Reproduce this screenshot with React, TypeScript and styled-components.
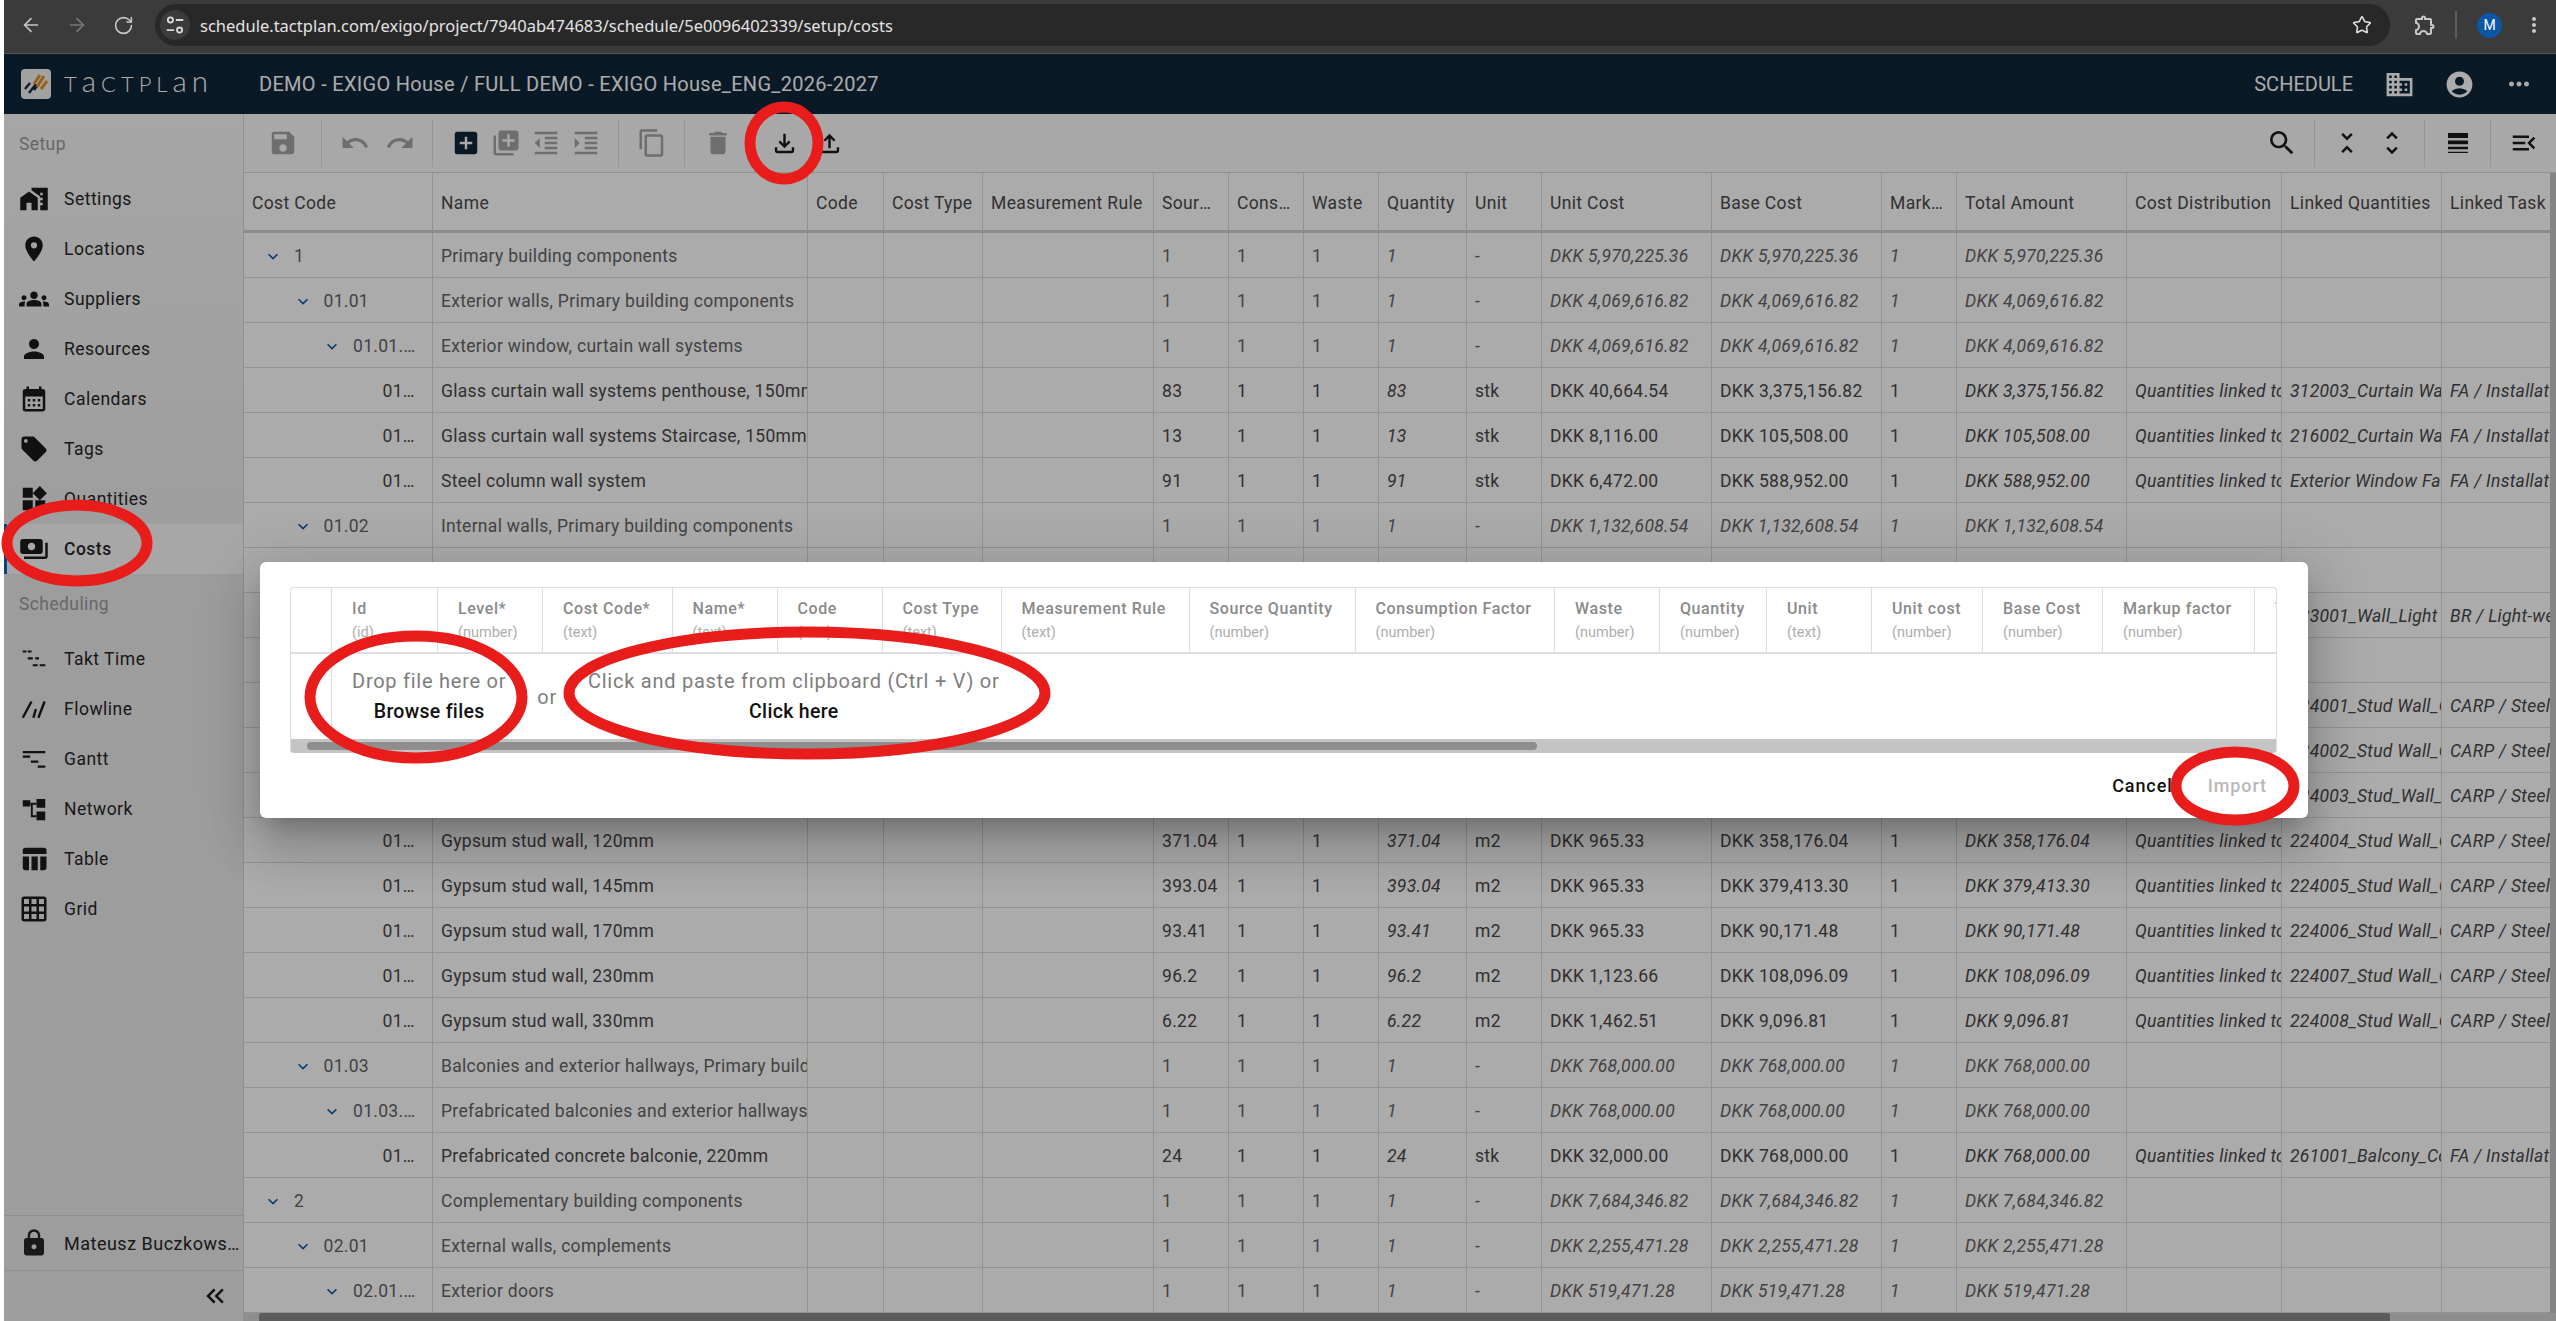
import styled, { createGlobalStyle } from "styled-components";
import { ArrowLeft, ArrowRight, RotateCw, Star } from "lucide-react";
import {
  MdAccountCircle,
  MdAddBox,
  MdCalendarMonth,
  MdContentCopy,
  MdDelete,
  MdDomain,
  MdExpandMore,
  MdFormatIndentDecrease,
  MdFormatIndentIncrease,
  MdGridOn,
  MdGroups,
  MdHomeWork,
  MdKeyboardDoubleArrowLeft,
  MdLibraryAdd,
  MdLocalOffer,
  MdLocationOn,
  MdLock,
  MdMenuOpen,
  MdMoreHoriz,
  MdMoreVert,
  MdOutlineExtension,
  MdOutlineFileDownload,
  MdOutlineFileUpload,
  MdPayments,
  MdPerson,
  MdRedo,
  MdSave,
  MdSearch,
  MdTableChart,
  MdUndo,
  MdUnfoldLess,
  MdUnfoldMore,
  MdWidgets,
} from "react-icons/md";

const GlobalStyle = createGlobalStyle`
  html, body {
    margin: 0;
    height: 100%;
    background: #fff;
    overflow: hidden;
  }
  body {
    font-family: Roboto, "Liberation Sans", sans-serif;
    padding-left: 4px;
    box-sizing: border-box;
  }
  #root { height: 100%; }
  * { box-sizing: border-box; }
`;

const COLUMNS = "189px 375px 76px 99px 171px 75px 75px 75px 88px 75px 170px 170px 75px 170px 155px 160px 160px";

const TaktIcon = () => (
  <svg width="30" height="30" viewBox="0 0 24 24" stroke="currentColor" strokeWidth="1.7" fill="none">
    <path d="M3 6h3M7 6h3M7 11.5h4M13 11.5h3M11 17h4M16.5 17h4.5" />
  </svg>
);

const FlowIcon = () => (
  <svg width="30" height="30" viewBox="0 0 24 24" stroke="currentColor" strokeWidth="1.9" fill="none">
    <path d="M3 19 10 6M11.5 19l2-7M15.5 19l5-13" />
  </svg>
);

const GanttIcon = () => (
  <svg width="30" height="30" viewBox="0 0 24 24" stroke="currentColor" strokeWidth="1.8" fill="none">
    <path d="M3 6.5h18M3 10h6M9.5 14h6M15 18h6" />
  </svg>
);

const NetworkIcon = () => (
  <svg width="30" height="30" viewBox="0 0 24 24" fill="currentColor">
    <rect x="3" y="5" width="6" height="5" />
    <rect x="14" y="4" width="7" height="7" />
    <rect x="14" y="14" width="7" height="7" />
    <path d="M9 7h5v1.500h-3V17h3v1.500H9.500V8.500H9z" />
  </svg>
);

const DensityIcon = () => (
  <svg width="30" height="30" viewBox="0 0 24 24" fill="currentColor">
    <path d="M4 4h16v4H4zM4 10h16v3H4zM4 15h16v2H4zM4 19h16v1H4z" />
  </svg>
);

const LogoMark = () => (
  <svg width="30" height="30" viewBox="0 0 30 30">
    <rect width="30" height="30" rx="4" fill="#f2f2f2" />
    <path d="M4 20l5-6M8 24l7-9M13 21l3-4" stroke="#1c2733" strokeWidth="2.400" />
    <path d="M13 15l6-9M16 18l7-11M20 20l6-8" stroke="#e2912c" strokeWidth="3" />
  </svg>
);

const SiteIcon = () => (
  <svg width="22" height="22" viewBox="0 0 24 24" fill="none" stroke="#d8d8d8" strokeWidth="2">
    <circle cx="7" cy="6.500" r="2.800" />
    <path d="M13 6.500h8M3 17.500h8" />
    <circle cx="17" cy="17.500" r="2.800" />
  </svg>
);

const Page = styled.div`
  display: flex;
  flex-direction: column;
  height: 100%;
`;

const BrowserBar = styled.div`
  display: flex;
  align-items: center;
  height: 54px;
  flex: none;
  padding: 0 0 3px 4px;
  background: #3b3b3b;
  border-bottom: 1px solid #555;
`;

const NavButton = styled.div<{ $dim?: boolean }>`
  display: flex;
  justify-content: center;
  width: 46px;
  color: ${(p) => (p.$dim ? "#797979" : "#c7c7c7")};
`;

const AddressBar = styled.div`
  display: flex;
  align-items: center;
  width: 2235px;
  height: 42px;
  margin-left: 9px;
  padding: 0 18px 0 5px;
  background: #282828;
  border-radius: 21px;
  color: #e3e3e3;
`;

const SiteBadge = styled.div`
  display: flex;
  align-items: center;
  justify-content: center;
  width: 30px;
  height: 30px;
  border-radius: 50%;
  background: #3b3b3b;
  flex: none;
`;

const Url = styled.span`
  margin-left: 10px;
  font-family: "Noto Sans", sans-serif;
  font-size: 16.500px;
  flex: 1;
`;

const ChromeIcons = styled.div`
  display: flex;
  align-items: center;
  flex: 1;
  color: #c7c7c7;
  padding-left: 23px;
`;

const Divider = styled.div`
  width: 2px;
  height: 28px;
  background: #5c5c5c;
  margin: 0 20px 0 18px;
`;

const Avatar = styled.div`
  display: flex;
  align-items: center;
  justify-content: center;
  width: 25px;
  height: 25px;
  border-radius: 50%;
  background: #0b57a4;
  color: #fff;
  font-size: 14px;
  margin-right: 20px;
`;

const AppShell = styled.div`
  position: relative;
  flex: 1;
  min-height: 0;
  display: flex;
  flex-direction: column;
`;

const AppHeader = styled.header`
  display: flex;
  align-items: center;
  flex: none;
  height: 60px;
  padding: 0 7px 0 17px;
  background: #0f263a;
  color: #fff;
`;

const Logo = styled.div`
  display: flex;
  align-items: center;
  width: 238px;
  gap: 13px;
  flex: none;
`;

const LogoText = styled.span`
  font-family: Lato, sans-serif;
  font-weight: 300;
  font-size: 22px;
  letter-spacing: 5px;
  color: #fff;
  line-height: 1;
`;

const LogoRound = styled.span`
  font-size: 1.340em;
  line-height: 0;
`;

const ProjectTitle = styled.div`
  font-size: 20px;
  letter-spacing: 0.300px;
`;

const ModuleLabel = styled.div`
  margin-left: auto;
  margin-right: 16px;
  font-size: 20px;
`;

const HeaderButton = styled.div`
  display: flex;
  align-items: center;
  justify-content: center;
  width: 60px;
`;

const Workspace = styled.div`
  flex: 1;
  min-height: 0;
  display: flex;
`;

const Sidebar = styled.nav`
  display: flex;
  flex-direction: column;
  flex: none;
  width: 240px;
  background: linear-gradient(#f8f8f8, #ebebeb 35%);
  border-right: 1px solid #d8d8d8;
`;

const SectionLabel = styled.div`
  display: flex;
  align-items: center;
  height: 60px;
  padding-left: 15px;
  font-size: 17.500px;
  letter-spacing: 0.400px;
  color: #9a9a9a;
`;

const NavItem = styled.div<{ $active?: boolean }>`
  display: flex;
  align-items: center;
  gap: 15px;
  height: 50px;
  font-size: 17.500px;
  letter-spacing: 0.500px;
  color: #262626;
  font-weight: ${(p) => (p.$active ? 500 : 400)};
  background: ${(p) => (p.$active ? "#fafafa" : "transparent")};
  border-left: ${(p) => (p.$active ? "3px solid #1565c0" : "0")};
  padding-left: ${(p) => (p.$active ? "12px" : "15px")};
  svg {
    flex: none;
    color: #1a1a1a;
  }
`;

const SidebarFooter = styled.div`
  margin-top: auto;
  border-top: 1px solid #d6d6d6;
`;

const UserRow = styled.div`
  display: flex;
  align-items: center;
  gap: 15px;
  height: 55px;
  padding-left: 15px;
  font-size: 18px;
  letter-spacing: 0.500px;
  color: #262626;
  border-bottom: 1px solid #d6d6d6;
`;

const UserName = styled.span`
  min-width: 0;
  flex: 1;
  overflow: hidden;
  white-space: nowrap;
  text-overflow: ellipsis;
  padding-right: 3px;
`;

const CollapseRow = styled.div`
  display: flex;
  align-items: center;
  justify-content: flex-end;
  height: 50px;
  padding-right: 13px;
  color: #1a1a1a;
`;

const Main = styled.main`
  flex: 1;
  min-width: 0;
  display: flex;
  flex-direction: column;
`;

const Toolbar = styled.div`
  display: flex;
  align-items: center;
  flex: none;
  height: 59px;
  background: #fbfbfb;
  border-bottom: 1px solid #d8d8d8;
`;

const ToolGroup = styled.div<{ $width: number; $last?: boolean; $push?: boolean }>`
  display: flex;
  align-items: center;
  justify-content: center;
  width: ${(p) => p.$width}px;
  height: 47px;
  flex: none;
  margin-left: ${(p) => (p.$push ? "auto" : "0")};
  border-right: ${(p) => (p.$last ? "0" : "1px solid #e0e0e0")};
`;

const ToolButton = styled.div<{ $on?: boolean; $wide?: boolean }>`
  display: flex;
  align-items: center;
  justify-content: center;
  width: ${(p) => (p.$wide ? 45 : 40)}px;
  color: ${(p) => (p.$on ? "#1a1a1a" : "#a5a5a5")};
`;

const AddButton = styled(ToolButton)`
  color: #0f263a;
`;

const TableArea = styled.div`
  flex: 1;
  min-height: 0;
  display: flex;
`;

const Grid = styled.div`
  flex: 1;
  min-width: 0;
  overflow: hidden;
  background: #fff;
`;

const HeaderRow = styled.div`
  display: grid;
  grid-template-columns: ${COLUMNS};
  height: 60px;
  border-bottom: 3px solid #cfcfcf;
`;

const HeaderCell = styled.div`
  display: flex;
  align-items: center;
  min-width: 0;
  padding: 2px 8px 0;
  border-right: 1px solid #dcdcdc;
  font-size: 17.500px;
  letter-spacing: 0.350px;
  color: #4a4a4a;
`;

const HeaderText = styled.span`
  overflow: hidden;
  white-space: nowrap;
  text-overflow: ellipsis;
`;

const Row = styled.div`
  display: grid;
  grid-template-columns: ${COLUMNS};
  height: 45px;
  border-bottom: 1px solid #dcdcdc;
`;

const Cell = styled.div<{ $italic?: boolean; $group?: boolean }>`
  min-width: 0;
  padding: 0 8px;
  line-height: 46px;
  border-right: 1px solid #dcdcdc;
  font-size: 17.500px;
  letter-spacing: 0.300px;
  white-space: nowrap;
  overflow: hidden;
  font-style: ${(p) => (p.$italic ? "italic" : "normal")};
  color: ${(p) => (p.$group ? "#646464" : "#484848")};
`;

const CodeCell = styled(Cell)<{ $level: number }>`
  display: flex;
  align-items: center;
  padding: 2px 13px 0 ${(p) => 19 + (p.$level - 1) * 29.5}px;
`;

const Chevron = styled.span`
  display: flex;
  justify-content: center;
  flex: none;
  width: 20px;
  margin-right: 11px;
  color: #0a57ab;
`;

const CodeText = styled.span`
  overflow: hidden;
  text-overflow: ellipsis;
`;

const VScroll = styled.div`
  flex: none;
  width: 6px;
  background: #c5c5c5;
`;

const HScroll = styled.div`
  flex: none;
  height: 8px;
  padding-left: 15px;
  padding-right: 166px;
  background: #d4d4d4;
`;

const HThumb = styled.div`
  height: 100%;
  background: #8a8a8a;
  border-radius: 2px 2px 0 0;
`;

const Backdrop = styled.div`
  position: absolute;
  inset: 0;
  background: rgba(0, 0, 0, 0.33);
`;

const Dialog = styled.div`
  position: absolute;
  left: 256px;
  top: 508px;
  width: 2048px;
  height: 256px;
  display: flex;
  flex-direction: column;
  padding: 25px 31px 0 30px;
  background: #fff;
  border-radius: 6px;
  box-shadow: 0 14px 19px -9px rgba(0, 0, 0, 0.2), 0 30px 48px 4px rgba(0, 0, 0, 0.14),
    0 11px 58px 10px rgba(0, 0, 0, 0.12);
`;

const ImportTable = styled.div`
  height: 166px;
  flex: none;
  display: flex;
  flex-direction: column;
  overflow: hidden;
  border: 1px solid #dedede;
  border-bottom: 0;
  border-radius: 4px 4px 0 0;
`;

const ImportHead = styled.div`
  display: flex;
  flex: none;
  height: 66px;
  border-bottom: 2px solid #dedede;
`;

const ImportCol = styled.div<{ $width: number }>`
  flex: none;
  width: ${(p) => p.$width}px;
  padding: 11px 0 0 20px;
  border-right: 1px solid #dedede;
  white-space: nowrap;
`;

const ColName = styled.div`
  font-size: 16px;
  font-weight: 500;
  line-height: 20px;
  letter-spacing: 0.600px;
  color: #8a8a8a;
`;

const ColType = styled.div`
  margin-top: 4px;
  font-size: 14.500px;
  line-height: 20px;
  color: #adadad;
`;

const ImportBody = styled.div`
  flex: 1;
  display: flex;
`;

const SpacerCell = styled.div`
  flex: none;
  width: 41px;
  border-right: 1px solid #dedede;
`;

const DropArea = styled.div`
  display: flex;
  align-items: center;
  padding: 0 0 0 20px;
  font-size: 20px;
  letter-spacing: 0.750px;
  color: #7d7d7d;
`;

const DropChoice = styled.div`
  display: flex;
  flex-direction: column;
  align-items: center;
  gap: 9px;
  line-height: 22px;
`;

const OrLabel = styled.span`
  margin: 0 31px;
`;

const ChoiceLink = styled.span`
  font-size: 19.500px;
  font-weight: 500;
  letter-spacing: 0.300px;
  color: #111;
`;

const ImportScroll = styled.div`
  flex: none;
  height: 14px;
  padding: 3px 739px 3px 16px;
  background: #c4c4c4;
  border-radius: 0 0 3px 3px;
`;

const ImportThumb = styled.div`
  height: 100%;
  border-radius: 4px;
  background: #8e8e8e;
`;

const DialogActions = styled.div`
  flex: 1;
  display: flex;
  align-items: center;
  justify-content: flex-end;
  gap: 35px;
  padding-right: 10px;
`;

const ActionButton = styled.span<{ $disabled?: boolean }>`
  font-size: 18px;
  font-weight: 500;
  letter-spacing: 0.900px;
  color: ${(p) => (p.$disabled ? "#b8b8b8" : "#111")};
`;

const Annotations = styled.svg`
  position: absolute;
  left: -4px;
  top: -54px;
  width: 2556px;
  height: 1321px;
  pointer-events: none;
`;

interface CostRow {
  level: number;
  code: string;
  name: string;
  source: string;
  unit: string;
  unitCost: string;
  base: string;
  total: string;
  distribution?: string;
  linked?: string;
  task?: string;
  group?: boolean;
}

const group = (level: number, code: string, name: string, amount: string): CostRow => ({
  level,
  code,
  name,
  source: "1",
  unit: "-",
  unitCost: amount,
  base: amount,
  total: amount,
  group: true,
});

const leaf = (
  code: string,
  name: string,
  source: string,
  unit: string,
  unitCost: string,
  base: string,
  linked: string,
  task: string,
): CostRow => ({
  level: 4,
  code,
  name,
  source,
  unit,
  unitCost,
  base,
  total: base,
  distribution: "Quantities linked to cost",
  linked,
  task,
});

const covered = (linked = "", task = ""): CostRow => ({
  level: 4,
  code: "",
  name: "",
  source: "",
  unit: "",
  unitCost: "",
  base: "",
  total: "",
  linked,
  task,
});

const rows: CostRow[] = [
  group(1, "1", "Primary building components", "DKK 5,970,225.36"),
  group(2, "01.01", "Exterior walls, Primary building components", "DKK 4,069,616.82"),
  group(3, "01.01.01", "Exterior window, curtain wall systems", "DKK 4,069,616.82"),
  leaf("01.01.01.01", "Glass curtain wall systems penthouse, 150mm", "83", "stk", "DKK 40,664.54", "DKK 3,375,156.82", "312003_Curtain Wall_Glass", "FA / Installation"),
  leaf("01.01.01.02", "Glass curtain wall systems Staircase, 150mm", "13", "stk", "DKK 8,116.00", "DKK 105,508.00", "216002_Curtain Wall_Glass", "FA / Installation"),
  leaf("01.01.01.03", "Steel column wall system", "91", "stk", "DKK 6,472.00", "DKK 588,952.00", "Exterior Window Facade", "FA / Installation"),
  group(2, "01.02", "Internal walls, Primary building components", "DKK 1,132,608.54"),
  covered(),
  covered("223001_Wall_Light weight", "BR / Light-weight"),
  covered(),
  covered("224001_Stud Wall_Gypsum", "CARP / Steel stud"),
  covered("224002_Stud Wall_Gypsum", "CARP / Steel stud"),
  covered("224003_Stud_Wall_Gypsum", "CARP / Steel stud"),
  leaf("01.02.02.04", "Gypsum stud wall, 120mm", "371.04", "m2", "DKK 965.33", "DKK 358,176.04", "224004_Stud Wall_Gypsum", "CARP / Steel stud"),
  leaf("01.02.02.05", "Gypsum stud wall, 145mm", "393.04", "m2", "DKK 965.33", "DKK 379,413.30", "224005_Stud Wall_Gypsum", "CARP / Steel stud"),
  leaf("01.02.02.06", "Gypsum stud wall, 170mm", "93.41", "m2", "DKK 965.33", "DKK 90,171.48", "224006_Stud Wall_Gypsum", "CARP / Steel stud"),
  leaf("01.02.02.07", "Gypsum stud wall, 230mm", "96.2", "m2", "DKK 1,123.66", "DKK 108,096.09", "224007_Stud Wall_Gypsum", "CARP / Steel stud"),
  leaf("01.02.02.08", "Gypsum stud wall, 330mm", "6.22", "m2", "DKK 1,462.51", "DKK 9,096.81", "224008_Stud Wall_Gypsum", "CARP / Steel stud"),
  group(2, "01.03", "Balconies and exterior hallways, Primary building components", "DKK 768,000.00"),
  group(3, "01.03.01", "Prefabricated balconies and exterior hallways", "DKK 768,000.00"),
  leaf("01.03.01.01", "Prefabricated concrete balconie, 220mm", "24", "stk", "DKK 32,000.00", "DKK 768,000.00", "261001_Balcony_Concrete", "FA / Installation"),
  group(1, "2", "Complementary building components", "DKK 7,684,346.82"),
  group(2, "02.01", "External walls, complements", "DKK 2,255,471.28"),
  group(3, "02.01.01", "Exterior doors", "DKK 519,471.28"),
];

const headers = [
  "Cost Code",
  "Name",
  "Code",
  "Cost Type",
  "Measurement Rule",
  "Source Quantity",
  "Consumption Factor",
  "Waste",
  "Quantity",
  "Unit",
  "Unit Cost",
  "Base Cost",
  "Markup Factor",
  "Total Amount",
  "Cost Distribution",
  "Linked Quantities",
  "Linked Task",
];

const setupItems = [
  { label: "Settings", icon: <MdHomeWork size={30} /> },
  { label: "Locations", icon: <MdLocationOn size={30} /> },
  { label: "Suppliers", icon: <MdGroups size={30} /> },
  { label: "Resources", icon: <MdPerson size={30} /> },
  { label: "Calendars", icon: <MdCalendarMonth size={30} /> },
  { label: "Tags", icon: <MdLocalOffer size={30} /> },
  { label: "Quantities", icon: <MdWidgets size={30} /> },
];

const schedulingItems = [
  { label: "Takt Time", icon: <TaktIcon /> },
  { label: "Flowline", icon: <FlowIcon /> },
  { label: "Gantt", icon: <GanttIcon /> },
  { label: "Network", icon: <NetworkIcon /> },
  { label: "Table", icon: <MdTableChart size={30} /> },
  { label: "Grid", icon: <MdGridOn size={30} /> },
];

const importColumns = [
  { name: "Id", type: "(id)", width: 106 },
  { name: "Level*", type: "(number)", width: 105 },
  { name: "Cost Code*", type: "(text)", width: 129.5 },
  { name: "Name*", type: "(text)", width: 105 },
  { name: "Code", type: "(text)", width: 105 },
  { name: "Cost Type", type: "(text)", width: 119 },
  { name: "Measurement Rule", type: "(text)", width: 188 },
  { name: "Source Quantity", type: "(number)", width: 166 },
  { name: "Consumption Factor", type: "(number)", width: 199.5 },
  { name: "Waste", type: "(number)", width: 105 },
  { name: "Quantity", type: "(number)", width: 107 },
  { name: "Unit", type: "(text)", width: 105 },
  { name: "Unit cost", type: "(number)", width: 111 },
  { name: "Base Cost", type: "(number)", width: 120 },
  { name: "Markup factor", type: "(number)", width: 152 },
  { name: "Total Amount", type: "(number)", width: 152 },
];

const App = () => {
  return (
    <Page>
      <GlobalStyle />
      <BrowserBar>
        <NavButton>
          <ArrowLeft size={22} strokeWidth={1.8} />
        </NavButton>
        <NavButton $dim>
          <ArrowRight size={22} strokeWidth={1.8} />
        </NavButton>
        <NavButton>
          <RotateCw size={21} strokeWidth={1.8} />
        </NavButton>
        <AddressBar>
          <SiteBadge>
            <SiteIcon />
          </SiteBadge>
          <Url>schedule.tactplan.com/exigo/project/7940ab474683/schedule/5e0096402339/setup/costs</Url>
          <Star size={20} strokeWidth={1.8} />
        </AddressBar>
        <ChromeIcons>
          <MdOutlineExtension size={24} />
          <Divider />
          <Avatar>M</Avatar>
          <MdMoreVert size={24} />
        </ChromeIcons>
      </BrowserBar>

      <AppShell>
        <AppHeader>
          <Logo>
            <LogoMark />
            <LogoText>
              T<LogoRound>a</LogoRound>CTPL<LogoRound>an</LogoRound>
            </LogoText>
          </Logo>
          <ProjectTitle>DEMO - EXIGO House / FULL DEMO - EXIGO House_ENG_2026-2027</ProjectTitle>
          <ModuleLabel>SCHEDULE</ModuleLabel>
          <HeaderButton>
            <MdDomain size={31} />
          </HeaderButton>
          <HeaderButton>
            <MdAccountCircle size={31} />
          </HeaderButton>
          <HeaderButton>
            <MdMoreHoriz size={30} />
          </HeaderButton>
        </AppHeader>

        <Workspace>
          <Sidebar>
            <SectionLabel>Setup</SectionLabel>
            {setupItems.map((item) => (
              <NavItem key={item.label}>
                {item.icon}
                {item.label}
              </NavItem>
            ))}
            <NavItem $active>
              <MdPayments size={30} />
              Costs
            </NavItem>
            <SectionLabel>Scheduling</SectionLabel>
            {schedulingItems.map((item) => (
              <NavItem key={item.label}>
                {item.icon}
                {item.label}
              </NavItem>
            ))}
            <SidebarFooter>
              <UserRow>
                <MdLock size={30} />
                <UserName>Mateusz Buczkowski</UserName>
              </UserRow>
              <CollapseRow>
                <MdKeyboardDoubleArrowLeft size={30} />
              </CollapseRow>
            </SidebarFooter>
          </Sidebar>

          <Main>
            <Toolbar>
              <ToolGroup $width={78}>
                <ToolButton>
                  <MdSave size={30} />
                </ToolButton>
              </ToolGroup>
              <ToolGroup $width={111}>
                <ToolButton $wide>
                  <MdUndo size={30} />
                </ToolButton>
                <ToolButton $wide>
                  <MdRedo size={30} />
                </ToolButton>
              </ToolGroup>
              <ToolGroup $width={186}>
                <AddButton>
                  <MdAddBox size={30} />
                </AddButton>
                <ToolButton>
                  <MdLibraryAdd size={30} />
                </ToolButton>
                <ToolButton>
                  <MdFormatIndentDecrease size={30} />
                </ToolButton>
                <ToolButton>
                  <MdFormatIndentIncrease size={30} />
                </ToolButton>
              </ToolGroup>
              <ToolGroup $width={66}>
                <ToolButton>
                  <MdContentCopy size={30} />
                </ToolButton>
              </ToolGroup>
              <ToolGroup $width={66}>
                <ToolButton>
                  <MdDelete size={30} />
                </ToolButton>
              </ToolGroup>
              <ToolGroup $width={112} $last>
                <ToolButton $wide $on>
                  <MdOutlineFileDownload size={29} />
                </ToolButton>
                <ToolButton $wide $on>
                  <MdOutlineFileUpload size={29} />
                </ToolButton>
              </ToolGroup>
              <ToolGroup $width={66} $push>
                <ToolButton $on>
                  <MdSearch size={32} />
                </ToolButton>
              </ToolGroup>
              <ToolGroup $width={110}>
                <ToolButton $wide $on>
                  <MdUnfoldLess size={30} />
                </ToolButton>
                <ToolButton $wide $on>
                  <MdUnfoldMore size={30} />
                </ToolButton>
              </ToolGroup>
              <ToolGroup $width={66}>
                <ToolButton $on>
                  <DensityIcon />
                </ToolButton>
              </ToolGroup>
              <ToolGroup $width={65} $last>
                <ToolButton $on>
                  <MdMenuOpen size={30} />
                </ToolButton>
              </ToolGroup>
            </Toolbar>

            <TableArea>
              <Grid>
                <HeaderRow>
                  {headers.map((title) => (
                    <HeaderCell key={title}>
                      <HeaderText>{title}</HeaderText>
                    </HeaderCell>
                  ))}
                </HeaderRow>
                {rows.map((row, index) => (
                  <Row key={index}>
                    <CodeCell $level={row.level} $group={row.group}>
                      {row.group ? (
                        <Chevron>
                          <MdExpandMore size={33} />
                        </Chevron>
                      ) : (
                        <Chevron />
                      )}
                      <CodeText>{row.code}</CodeText>
                    </CodeCell>
                    <Cell $group={row.group}>{row.name}</Cell>
                    <Cell />
                    <Cell />
                    <Cell />
                    <Cell $group={row.group}>{row.source}</Cell>
                    <Cell $group={row.group}>{row.source && "1"}</Cell>
                    <Cell $group={row.group}>{row.source && "1"}</Cell>
                    <Cell $group={row.group} $italic>
                      {row.source}
                    </Cell>
                    <Cell $group={row.group}>{row.unit}</Cell>
                    <Cell $group={row.group} $italic={row.group}>
                      {row.unitCost}
                    </Cell>
                    <Cell $group={row.group} $italic={row.group}>
                      {row.base}
                    </Cell>
                    <Cell $group={row.group} $italic={row.group}>
                      {row.source && "1"}
                    </Cell>
                    <Cell $group={row.group} $italic>
                      {row.total}
                    </Cell>
                    <Cell $italic>{row.distribution}</Cell>
                    <Cell $italic>{row.linked}</Cell>
                    <Cell $italic>{row.task}</Cell>
                  </Row>
                ))}
              </Grid>
              <VScroll />
            </TableArea>
            <HScroll>
              <HThumb />
            </HScroll>
          </Main>
        </Workspace>

        <Backdrop />

        <Dialog>
          <ImportTable>
            <ImportHead>
              <SpacerCell />
              {importColumns.map((col) => (
                <ImportCol key={col.name} $width={col.width}>
                  <ColName>{col.name}</ColName>
                  <ColType>{col.type}</ColType>
                </ImportCol>
              ))}
            </ImportHead>
            <ImportBody>
              <SpacerCell />
              <DropArea>
                <DropChoice>
                  <span>Drop file here or</span>
                  <ChoiceLink>Browse files</ChoiceLink>
                </DropChoice>
                <OrLabel>or</OrLabel>
                <DropChoice>
                  <span>Click and paste from clipboard (Ctrl + V) or</span>
                  <ChoiceLink>Click here</ChoiceLink>
                </DropChoice>
              </DropArea>
            </ImportBody>
            <ImportScroll>
              <ImportThumb />
            </ImportScroll>
          </ImportTable>
          <DialogActions>
            <ActionButton>Cancel</ActionButton>
            <ActionButton $disabled>Import</ActionButton>
          </DialogActions>
        </Dialog>

        <Annotations viewBox="0 0 2556 1321" fill="none" stroke="#e91c1c" strokeWidth="11">
          <ellipse cx="784" cy="143" rx="34" ry="36" />
          <ellipse cx="77" cy="543" rx="70" ry="38" />
          <ellipse cx="416" cy="697" rx="106" ry="61" />
          <ellipse cx="807" cy="693" rx="238" ry="61" />
          <ellipse cx="2235" cy="786" rx="59" ry="34" />
        </Annotations>
      </AppShell>
    </Page>
  );
};

export default App;
